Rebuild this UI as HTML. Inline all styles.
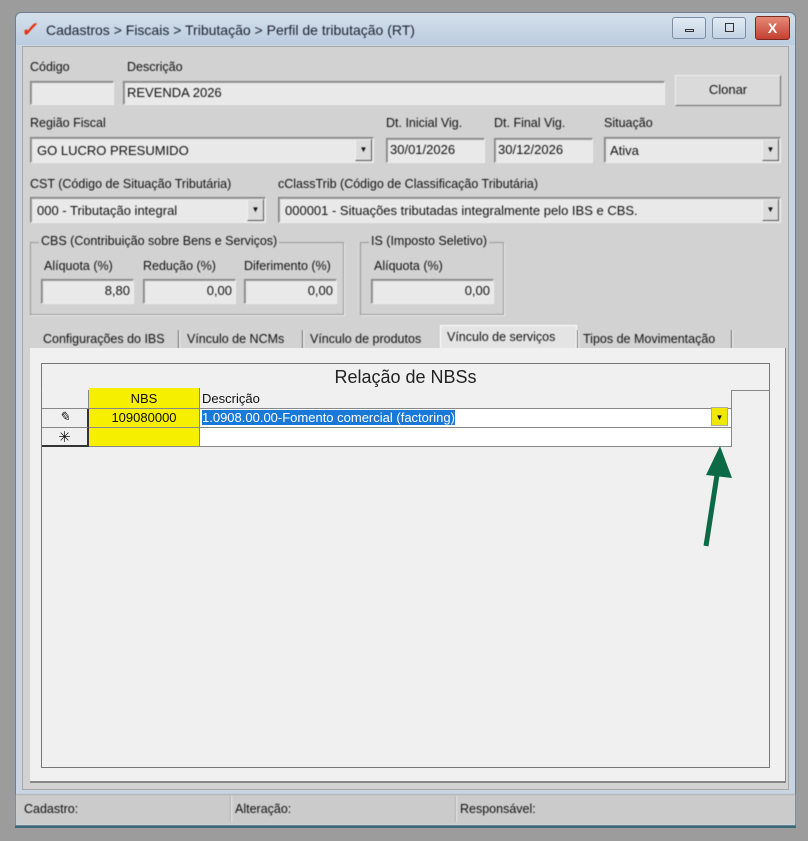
<!DOCTYPE html>
<html><head><meta charset="utf-8"><style>
*{box-sizing:border-box;margin:0;padding:0}
body{width:808px;height:841px;background:#9c9c9c;font-family:"Liberation Sans",sans-serif;font-size:12px;color:#111;position:relative;overflow:hidden}
.a{position:absolute}
.win{left:15px;top:12px;width:781px;height:814px;background:#c9d5e2;border:1px solid #6e7f90;border-radius:6px 6px 0 0;box-shadow:0 2px 0 #3a6a78}
.blur{filter:blur(0.5px)}
.inp{background:#e9e9e9;border:1px solid #808080;border-right-color:#eee;border-bottom-color:#eee;box-shadow:inset 1px 1px 0 #a0a0a0;padding:3px 3px;font-size:13px;white-space:nowrap;overflow:hidden}
.r{text-align:right}
.cb .dd{position:absolute;right:1px;top:1px;bottom:1px;width:17px;background:#dcdcdc;border:1px solid #eee;border-right-color:#555;border-bottom-color:#555;font-size:8px;text-align:center;line-height:20px}
.lbl{font-size:12.5px;white-space:nowrap}
.grp{border:1px solid #999;box-shadow:1px 1px 0 #eee}
.grp span{position:absolute;top:-9px;left:8px;background:#d2d2d2;padding:0 2px;font-size:12.5px;white-space:nowrap}
.tab{top:328px;height:21px;font-size:12.5px;padding:4px 0 0 0;white-space:nowrap}
.sep{top:330px;width:2px;height:19px;border-left:1px solid #666;border-right:1px solid #fff}
.cell{position:absolute;border-right:1px solid #888;border-bottom:1px solid #888;font-size:13px;white-space:nowrap}
</style></head><body>
<div class="a win"></div>
<div class="a" style="left:16px;top:13px;width:779px;height:32px;background:linear-gradient(#d3dfeb,#bccde0);border-radius:6px 6px 0 0"></div>
<div class="a blur" style="left:22px;top:17px;font-size:20px;color:#e03010;font-weight:bold;transform:skewX(-10deg)">✓</div>
<div class="a blur" style="left:46px;top:22px;font-size:14px;color:#1a2030">Cadastros &gt; Fiscais &gt; Tributação &gt; Perfil de tributação (RT)</div>
<div class="a" style="left:672px;top:17px;width:34px;height:22px;border:1px solid #7b8ea5;border-radius:3px;background:linear-gradient(#e2ebf4,#c3d2e3)"><div class="a" style="left:12px;top:11px;width:9px;height:3px;border:1px solid #333"></div></div>
<div class="a" style="left:712px;top:17px;width:34px;height:22px;border:1px solid #7b8ea5;border-radius:3px;background:linear-gradient(#e2ebf4,#c3d2e3)"><div class="a" style="left:12px;top:5px;width:9px;height:9px;border:1px solid #333"></div></div>
<div class="a" style="left:755px;top:16px;width:35px;height:24px;border:1px solid #7a2a20;border-radius:3px;background:linear-gradient(#e58a78,#c44030);color:#fff;font-weight:bold;font-size:14px;text-align:center;line-height:22px">X</div>
<div class="a" style="left:22px;top:46px;width:767px;height:744px;background:#d2d2d2;border:1px solid #a8a8a8"></div>

<div class="blur">
<div class="a lbl" style="left:30px;top:60px">Código</div>
<div class="a lbl" style="left:127px;top:60px">Descrição</div>
<div class="a inp" style="left:30px;top:81px;width:84px;height:24px"></div>
<div class="a inp" style="left:123px;top:81px;width:542px;height:24px">REVENDA 2026</div>
<div class="a" style="left:675px;top:75px;width:106px;height:31px;background:#dadada;border:1px solid #eee;border-right-color:#666;border-bottom-color:#666;text-align:center;line-height:28px;font-size:13px">Clonar</div>

<div class="a lbl" style="left:30px;top:116px">Região Fiscal</div>
<div class="a lbl" style="left:386px;top:116px">Dt. Inicial Vig.</div>
<div class="a lbl" style="left:494px;top:116px">Dt. Final Vig.</div>
<div class="a lbl" style="left:604px;top:116px">Situação</div>
<div class="a inp cb" style="left:30px;top:137px;width:344px;height:26px;padding:5px 6px">GO LUCRO PRESUMIDO<div class="dd">▼</div></div>
<div class="a inp" style="left:386px;top:138px;width:99px;height:25px">30/01/2026</div>
<div class="a inp" style="left:494px;top:138px;width:99px;height:25px">30/12/2026</div>
<div class="a inp cb" style="left:604px;top:137px;width:177px;height:26px;padding:5px 5px">Ativa<div class="dd">▼</div></div>

<div class="a lbl" style="left:30px;top:177px">CST (Código de Situação Tributária)</div>
<div class="a lbl" style="left:278px;top:177px">cClassTrib (Código de Classificação Tributária)</div>
<div class="a inp cb" style="left:30px;top:197px;width:236px;height:26px;padding:5px 6px">000 - Tributação integral<div class="dd">▼</div></div>
<div class="a inp cb" style="left:278px;top:197px;width:503px;height:26px;padding:5px 6px">000001 - Situações tributadas integralmente pelo IBS e CBS.<div class="dd">▼</div></div>

<div class="a grp" style="left:30px;top:242px;width:314px;height:73px"><span>CBS (Contribuição sobre Bens e Serviços)</span></div>
<div class="a lbl" style="left:44px;top:259px">Alíquota (%)</div>
<div class="a lbl" style="left:143px;top:259px">Redução (%)</div>
<div class="a lbl" style="left:244px;top:259px">Diferimento (%)</div>
<div class="a inp r" style="left:41px;top:279px;width:93px;height:25px">8,80</div>
<div class="a inp r" style="left:143px;top:279px;width:93px;height:25px">0,00</div>
<div class="a inp r" style="left:244px;top:279px;width:93px;height:25px">0,00</div>
<div class="a grp" style="left:360px;top:242px;width:144px;height:73px"><span>IS (Imposto Seletivo)</span></div>
<div class="a lbl" style="left:374px;top:259px">Alíquota (%)</div>
<div class="a inp r" style="left:371px;top:279px;width:123px;height:25px">0,00</div>

<div class="a" style="left:440px;top:325px;width:137px;height:24px;background:#e4e4e4;border:1px solid #fff;border-bottom:none"></div>
<div class="a tab" style="left:43px">Configurações do IBS</div>
<div class="a sep" style="left:178px"></div>
<div class="a tab" style="left:187px">Vínculo de NCMs</div>
<div class="a sep" style="left:302px"></div>
<div class="a tab" style="left:310px">Vínculo de produtos</div>
<div class="a tab" style="left:447px;top:326px">Vínculo de serviços</div>
<div class="a sep" style="left:577px"></div>
<div class="a tab" style="left:583px">Tipos de Movimentação</div>
<div class="a sep" style="left:731px"></div>
</div>

<div class="a" style="left:30px;top:348px;width:756px;height:435px;background:#f0f0f0;border-right:1px solid #888;border-bottom:2px solid #888"></div>
<div class="a" style="left:41px;top:363px;width:729px;height:405px;border:1px solid #777;background:#f0f0f0"></div>
<div class="a" style="left:41px;top:363px;width:729px;height:28px;border-bottom:1px solid #888;text-align:center;font-size:18px;line-height:28px;color:#222">Relação de NBSs</div>
<div class="cell" style="left:42px;top:390px;width:47px;height:19px;background:#f0f0f0"></div>
<div class="cell" style="left:89px;top:388px;width:111px;height:21px;background:#f6f000;text-align:center;padding-top:3px">NBS</div>
<div class="cell" style="left:200px;top:390px;width:532px;height:19px;background:#f0f0f0;padding:1px 2px">Descrição</div>
<div class="cell" style="left:42px;top:409px;width:47px;height:19px;background:#f0f0f0;text-align:center;font-style:italic;border-right:2px solid #333">✎</div>
<div class="cell" style="left:89px;top:409px;width:111px;height:19px;background:#f6f000;text-align:center;padding-top:1px">109080000</div>
<div class="cell" style="left:200px;top:409px;width:532px;height:19px;background:#fff;padding:1px 2px"><span style="background:#1979d8;color:#fff">1.0908.00.00-Fomento comercial (factoring)</span></div>
<div class="a" style="left:711px;top:407px;width:17px;height:19px;background:#f0e800;border:1px solid #aaa;font-size:8px;text-align:center;line-height:20px">▼</div>
<div class="cell" style="left:42px;top:428px;width:47px;height:19px;background:#f0f0f0;text-align:center;font-size:15px;border-right:2px solid #333;border-bottom:2px solid #333">✳</div>
<div class="cell" style="left:89px;top:428px;width:111px;height:19px;background:#f6f000"></div>
<div class="cell" style="left:200px;top:428px;width:532px;height:19px;background:#fff"></div>

<svg class="a" style="left:690px;top:440px" width="50" height="112"><line x1="16" y1="106" x2="29" y2="22" stroke="#0c6a48" stroke-width="5"/><polygon points="30,6 16,35 42,38" fill="#0c6a48"/></svg>

<div class="blur">
<div class="a" style="left:16px;top:794px;width:779px;height:30px;background:#cbcbcb;border-top:1px solid #aaa"></div>
<div class="a" style="left:230px;top:796px;width:2px;height:26px;border-left:1px solid #aaa;border-right:1px solid #eee"></div>
<div class="a" style="left:455px;top:796px;width:2px;height:26px;border-left:1px solid #aaa;border-right:1px solid #eee"></div>
<div class="a lbl" style="left:24px;top:802px">Cadastro:</div>
<div class="a lbl" style="left:235px;top:802px">Alteração:</div>
<div class="a lbl" style="left:460px;top:802px">Responsável:</div>
</div>
</body></html>
